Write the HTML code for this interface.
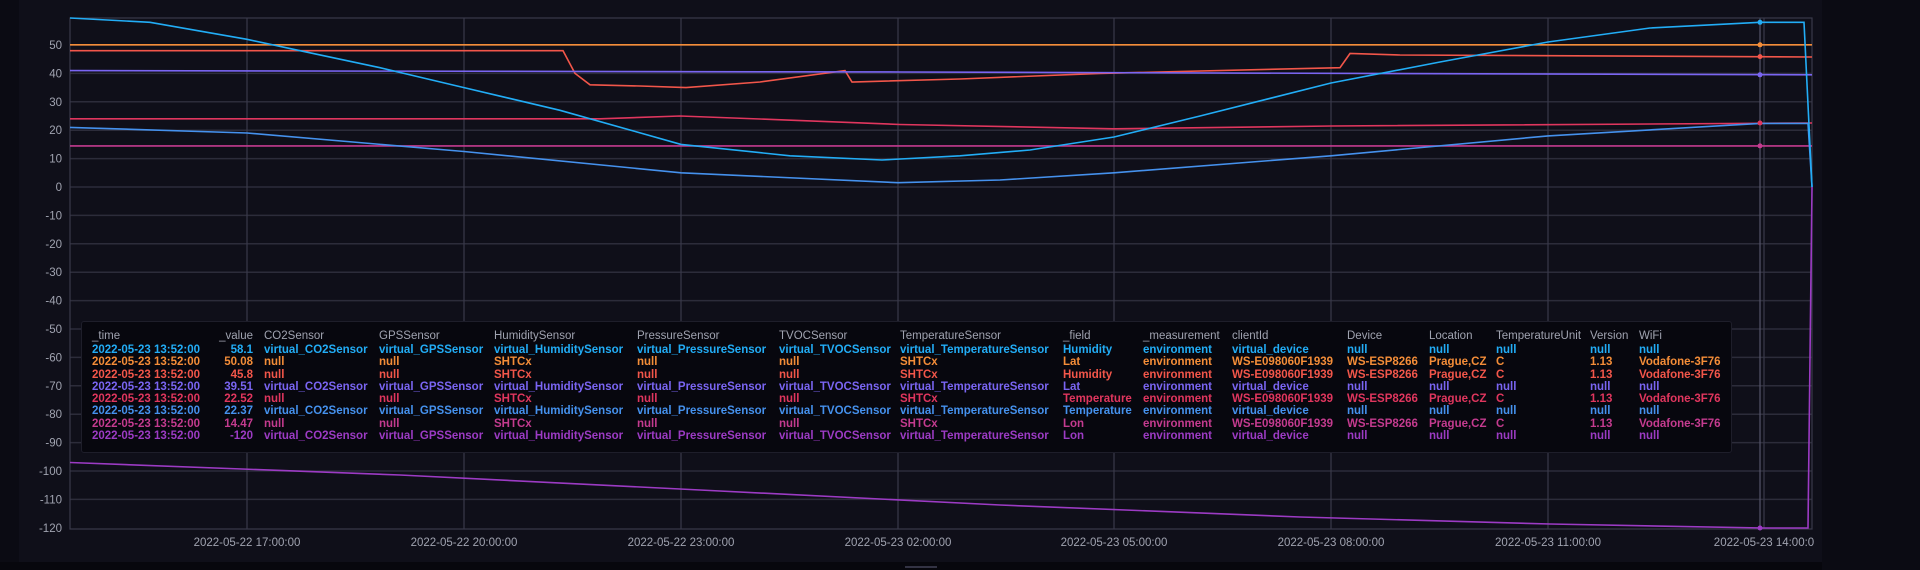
<!DOCTYPE html>
<html><head><meta charset="utf-8"><style>
html,body{margin:0;padding:0;width:1920px;height:570px;overflow:hidden;background:#0b0b13;font-family:"Liberation Sans",sans-serif;}
.panel{position:absolute;left:19px;top:0;width:1803px;height:562px;background:#0f0f19;}
.tt{position:absolute;left:81px;top:321px;width:1649px;height:130px;background:#07070e;border:1px solid #1e1e2a;border-radius:3px;font-size:11.5px;font-weight:bold;}
.tt div{position:absolute;white-space:nowrap;}
.h{color:#a0a3b0;font-weight:normal;}
</style></head><body>
<div class="panel"></div>
<svg width="1920" height="570" style="position:absolute;left:0;top:0">
<g stroke="#2c2c3a" stroke-width="1.5">
<line x1="70" x2="1812" y1="45" y2="45"/><line x1="70" x2="1812" y1="73.4" y2="73.4"/><line x1="70" x2="1812" y1="101.8" y2="101.8"/><line x1="70" x2="1812" y1="130.2" y2="130.2"/><line x1="70" x2="1812" y1="158.6" y2="158.6"/><line x1="70" x2="1812" y1="187" y2="187"/><line x1="70" x2="1812" y1="215.4" y2="215.4"/><line x1="70" x2="1812" y1="243.8" y2="243.8"/><line x1="70" x2="1812" y1="272.2" y2="272.2"/><line x1="70" x2="1812" y1="300.6" y2="300.6"/><line x1="70" x2="1812" y1="329" y2="329"/><line x1="70" x2="1812" y1="357.4" y2="357.4"/><line x1="70" x2="1812" y1="385.8" y2="385.8"/><line x1="70" x2="1812" y1="414.2" y2="414.2"/><line x1="70" x2="1812" y1="442.6" y2="442.6"/><line x1="70" x2="1812" y1="471" y2="471"/><line x1="70" x2="1812" y1="499.4" y2="499.4"/>
</g>
<g stroke="#3a3a4a" stroke-width="1.2">
<line x1="247" x2="247" y1="18" y2="529"/><line x1="464" x2="464" y1="18" y2="529"/><line x1="681" x2="681" y1="18" y2="529"/><line x1="898" x2="898" y1="18" y2="529"/><line x1="1114" x2="1114" y1="18" y2="529"/><line x1="1331" x2="1331" y1="18" y2="529"/><line x1="1548" x2="1548" y1="18" y2="529"/><line x1="1764" x2="1764" y1="18" y2="529"/>
<line x1="1760" x2="1760" y1="18" y2="529" stroke="#55556a"/>
</g>
<rect x="70" y="18" width="1742" height="511" fill="none" stroke="#3a3a4a" stroke-width="1.2"/>
<g fill="none" stroke-width="1.6">
<line x1="70" x2="1812" y1="44.8" y2="44.8" stroke="#f48d38"/>
<polyline stroke="#f2564a" points="70,50.7 563,50.7 575,73.4 590,84.8 640,86 686,87.6 760,82 845,70.6 852,82 960,79 1100,73.4 1340,67.7 1350,53.5 1400,55 1812,57"/>
<polyline stroke="#7a65f2" points="70,70.6 900,72 1812,74.8"/>
<polyline stroke="#e0365e" points="70,118.8 600,118.8 680,116 760,119 900,124.5 1114,128.8 1331,126 1812,123"/>
<line x1="70" x2="1812" y1="145.9" y2="145.9" stroke="#c43b8f"/>
<polyline stroke="#4591ed" points="70,127.4 247,133 464,151.5 681,172.8 898,182.7 1000,180 1114,172.8 1331,155.8 1548,135.9 1760,123.4 1808,123.4 1812,187"/>
<polyline stroke="#22adf6" points="70,18 150,22.3 247,39.3 300,50.7 380,67.7 464,87.6 560,110.3 681,144.4 790,155.8 882,160 960,155.8 1030,150 1114,137 1200,116 1331,83 1440,62 1548,42 1650,28 1760,22.3 1804,22.3 1812,187"/>
<polyline stroke="#9c3bc4" points="70,462.5 400,475 700,490 1000,505 1300,517 1550,524 1764,528 1808,528 1812,187"/>
</g>
<g>
<circle cx="1760" cy="22.3" r="2.5" fill="#22adf6"/><circle cx="1760" cy="44.8" r="2.5" fill="#f48d38"/><circle cx="1760" cy="56.6" r="2.5" fill="#f2564a"/><circle cx="1760" cy="74.8" r="2.5" fill="#7a65f2"/><circle cx="1760" cy="123" r="2.5" fill="#e0365e"/><circle cx="1760" cy="145.9" r="2.5" fill="#c43b8f"/><circle cx="1760" cy="528" r="2.5" fill="#9c3bc4"/>
</g>
<g fill="#a0a3b0" font-size="11.5" font-family="Liberation Sans, sans-serif" text-anchor="end">
<text x="62" y="49">50</text><text x="62" y="77.4">40</text><text x="62" y="105.8">30</text><text x="62" y="134.2">20</text><text x="62" y="162.6">10</text><text x="62" y="191">0</text><text x="62" y="219.4">-10</text><text x="62" y="247.8">-20</text><text x="62" y="276.2">-30</text><text x="62" y="304.6">-40</text><text x="62" y="333">-50</text><text x="62" y="361.4">-60</text><text x="62" y="389.8">-70</text><text x="62" y="418.2">-80</text><text x="62" y="446.6">-90</text><text x="62" y="475">-100</text><text x="62" y="503.4">-110</text><text x="62" y="531.8">-120</text>
</g>
<g fill="#a0a3b0" font-size="11.5" font-family="Liberation Sans, sans-serif" text-anchor="middle">
<text x="247" y="546">2022-05-22 17:00:00</text><text x="464" y="546">2022-05-22 20:00:00</text><text x="681" y="546">2022-05-22 23:00:00</text><text x="898" y="546">2022-05-23 02:00:00</text><text x="1114" y="546">2022-05-23 05:00:00</text><text x="1331" y="546">2022-05-23 08:00:00</text><text x="1548" y="546">2022-05-23 11:00:00</text><text x="1764" y="546">2022-05-23 14:00:0</text>
</g>
<rect x="0" y="562" width="1822" height="8" fill="#07070d"/>
<rect x="905" y="566" width="32" height="2" fill="#333344"/>
</svg>
<div class="tt">
<div class="h" style="left:10px;top:8px">_time</div><div class="h" style="right:1478px;top:8px">_value</div><div class="h" style="left:182px;top:8px">CO2Sensor</div><div class="h" style="left:297px;top:8px">GPSSensor</div><div class="h" style="left:412px;top:8px">HumiditySensor</div><div class="h" style="left:555px;top:8px">PressureSensor</div><div class="h" style="left:697px;top:8px">TVOCSensor</div><div class="h" style="left:818px;top:8px">TemperatureSensor</div><div class="h" style="left:981px;top:8px">_field</div><div class="h" style="left:1061px;top:8px">_measurement</div><div class="h" style="left:1150px;top:8px">clientId</div><div class="h" style="left:1265px;top:8px">Device</div><div class="h" style="left:1347px;top:8px">Location</div><div class="h" style="left:1414px;top:8px">TemperatureUnit</div><div class="h" style="left:1508px;top:8px">Version</div><div class="h" style="left:1557px;top:8px">WiFi</div>
<div style="left:10px;top:22px;line-height:12.3px;">
<span style="color:#22adf6">2022-05-23 13:52:00</span><br><span style="color:#f48d38">2022-05-23 13:52:00</span><br><span style="color:#f2564a">2022-05-23 13:52:00</span><br><span style="color:#7a65f2">2022-05-23 13:52:00</span><br><span style="color:#e0365e">2022-05-23 13:52:00</span><br><span style="color:#4591ed">2022-05-23 13:52:00</span><br><span style="color:#c43b8f">2022-05-23 13:52:00</span><br><span style="color:#9c3bc4">2022-05-23 13:52:00</span></div>
<div style="right:1478px;top:22px;line-height:12.3px;text-align:right">
<span style="color:#22adf6">58.1</span><br><span style="color:#f48d38">50.08</span><br><span style="color:#f2564a">45.8</span><br><span style="color:#7a65f2">39.51</span><br><span style="color:#e0365e">22.52</span><br><span style="color:#4591ed">22.37</span><br><span style="color:#c43b8f">14.47</span><br><span style="color:#9c3bc4">-120</span></div>
<div style="left:182px;top:22px;line-height:12.3px">
<span style="color:#22adf6">virtual_CO2Sensor</span><br><span style="color:#f48d38">null</span><br><span style="color:#f2564a">null</span><br><span style="color:#7a65f2">virtual_CO2Sensor</span><br><span style="color:#e0365e">null</span><br><span style="color:#4591ed">virtual_CO2Sensor</span><br><span style="color:#c43b8f">null</span><br><span style="color:#9c3bc4">virtual_CO2Sensor</span></div>
<div style="left:297px;top:22px;line-height:12.3px">
<span style="color:#22adf6">virtual_GPSSensor</span><br><span style="color:#f48d38">null</span><br><span style="color:#f2564a">null</span><br><span style="color:#7a65f2">virtual_GPSSensor</span><br><span style="color:#e0365e">null</span><br><span style="color:#4591ed">virtual_GPSSensor</span><br><span style="color:#c43b8f">null</span><br><span style="color:#9c3bc4">virtual_GPSSensor</span></div>
<div style="left:412px;top:22px;line-height:12.3px">
<span style="color:#22adf6">virtual_HumiditySensor</span><br><span style="color:#f48d38">SHTCx</span><br><span style="color:#f2564a">SHTCx</span><br><span style="color:#7a65f2">virtual_HumiditySensor</span><br><span style="color:#e0365e">SHTCx</span><br><span style="color:#4591ed">virtual_HumiditySensor</span><br><span style="color:#c43b8f">SHTCx</span><br><span style="color:#9c3bc4">virtual_HumiditySensor</span></div>
<div style="left:555px;top:22px;line-height:12.3px">
<span style="color:#22adf6">virtual_PressureSensor</span><br><span style="color:#f48d38">null</span><br><span style="color:#f2564a">null</span><br><span style="color:#7a65f2">virtual_PressureSensor</span><br><span style="color:#e0365e">null</span><br><span style="color:#4591ed">virtual_PressureSensor</span><br><span style="color:#c43b8f">null</span><br><span style="color:#9c3bc4">virtual_PressureSensor</span></div>
<div style="left:697px;top:22px;line-height:12.3px">
<span style="color:#22adf6">virtual_TVOCSensor</span><br><span style="color:#f48d38">null</span><br><span style="color:#f2564a">null</span><br><span style="color:#7a65f2">virtual_TVOCSensor</span><br><span style="color:#e0365e">null</span><br><span style="color:#4591ed">virtual_TVOCSensor</span><br><span style="color:#c43b8f">null</span><br><span style="color:#9c3bc4">virtual_TVOCSensor</span></div>
<div style="left:818px;top:22px;line-height:12.3px">
<span style="color:#22adf6">virtual_TemperatureSensor</span><br><span style="color:#f48d38">SHTCx</span><br><span style="color:#f2564a">SHTCx</span><br><span style="color:#7a65f2">virtual_TemperatureSensor</span><br><span style="color:#e0365e">SHTCx</span><br><span style="color:#4591ed">virtual_TemperatureSensor</span><br><span style="color:#c43b8f">SHTCx</span><br><span style="color:#9c3bc4">virtual_TemperatureSensor</span></div>
<div style="left:981px;top:22px;line-height:12.3px">
<span style="color:#22adf6">Humidity</span><br><span style="color:#f48d38">Lat</span><br><span style="color:#f2564a">Humidity</span><br><span style="color:#7a65f2">Lat</span><br><span style="color:#e0365e">Temperature</span><br><span style="color:#4591ed">Temperature</span><br><span style="color:#c43b8f">Lon</span><br><span style="color:#9c3bc4">Lon</span></div>
<div style="left:1061px;top:22px;line-height:12.3px">
<span style="color:#22adf6">environment</span><br><span style="color:#f48d38">environment</span><br><span style="color:#f2564a">environment</span><br><span style="color:#7a65f2">environment</span><br><span style="color:#e0365e">environment</span><br><span style="color:#4591ed">environment</span><br><span style="color:#c43b8f">environment</span><br><span style="color:#9c3bc4">environment</span></div>
<div style="left:1150px;top:22px;line-height:12.3px">
<span style="color:#22adf6">virtual_device</span><br><span style="color:#f48d38">WS-E098060F1939</span><br><span style="color:#f2564a">WS-E098060F1939</span><br><span style="color:#7a65f2">virtual_device</span><br><span style="color:#e0365e">WS-E098060F1939</span><br><span style="color:#4591ed">virtual_device</span><br><span style="color:#c43b8f">WS-E098060F1939</span><br><span style="color:#9c3bc4">virtual_device</span></div>
<div style="left:1265px;top:22px;line-height:12.3px">
<span style="color:#22adf6">null</span><br><span style="color:#f48d38">WS-ESP8266</span><br><span style="color:#f2564a">WS-ESP8266</span><br><span style="color:#7a65f2">null</span><br><span style="color:#e0365e">WS-ESP8266</span><br><span style="color:#4591ed">null</span><br><span style="color:#c43b8f">WS-ESP8266</span><br><span style="color:#9c3bc4">null</span></div>
<div style="left:1347px;top:22px;line-height:12.3px">
<span style="color:#22adf6">null</span><br><span style="color:#f48d38">Prague,CZ</span><br><span style="color:#f2564a">Prague,CZ</span><br><span style="color:#7a65f2">null</span><br><span style="color:#e0365e">Prague,CZ</span><br><span style="color:#4591ed">null</span><br><span style="color:#c43b8f">Prague,CZ</span><br><span style="color:#9c3bc4">null</span></div>
<div style="left:1414px;top:22px;line-height:12.3px">
<span style="color:#22adf6">null</span><br><span style="color:#f48d38">C</span><br><span style="color:#f2564a">C</span><br><span style="color:#7a65f2">null</span><br><span style="color:#e0365e">C</span><br><span style="color:#4591ed">null</span><br><span style="color:#c43b8f">C</span><br><span style="color:#9c3bc4">null</span></div>
<div style="left:1508px;top:22px;line-height:12.3px">
<span style="color:#22adf6">null</span><br><span style="color:#f48d38">1.13</span><br><span style="color:#f2564a">1.13</span><br><span style="color:#7a65f2">null</span><br><span style="color:#e0365e">1.13</span><br><span style="color:#4591ed">null</span><br><span style="color:#c43b8f">1.13</span><br><span style="color:#9c3bc4">null</span></div>
<div style="left:1557px;top:22px;line-height:12.3px">
<span style="color:#22adf6">null</span><br><span style="color:#f48d38">Vodafone-3F76</span><br><span style="color:#f2564a">Vodafone-3F76</span><br><span style="color:#7a65f2">null</span><br><span style="color:#e0365e">Vodafone-3F76</span><br><span style="color:#4591ed">null</span><br><span style="color:#c43b8f">Vodafone-3F76</span><br><span style="color:#9c3bc4">null</span></div>
</div>
</body></html>
